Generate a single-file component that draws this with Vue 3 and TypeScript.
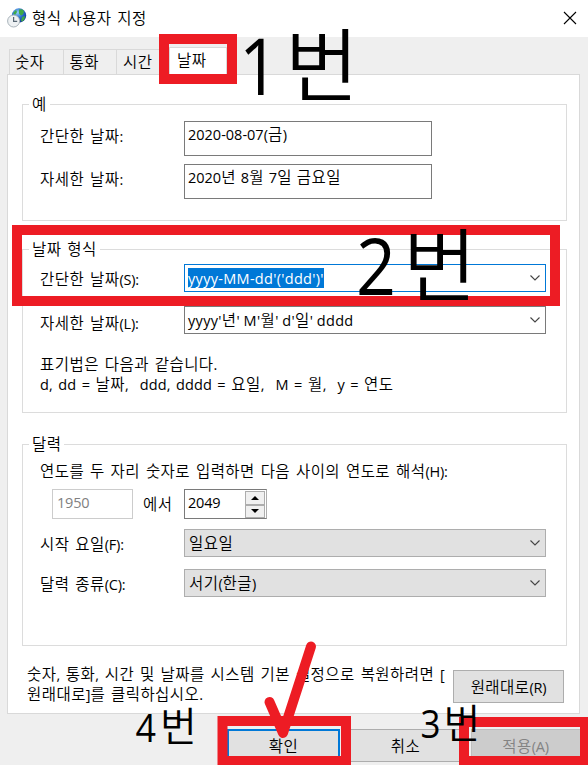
<script setup lang="ts">
import { h, type FunctionalComponent } from 'vue'

/* Splits a label into Hangul and Latin runs so each script gets its own metrics. */
const Txt: FunctionalComponent<{ t: string }> = (props) =>
  h(
    'span',
    { class: 'txt' },
    (props.t.match(/[가-힣]+|[^가-힣]+/g) ?? []).map((run) =>
      h('span', { class: /[가-힣]/.test(run) ? 'ko' : 'la' }, run),
    ),
  )
Txt.props = ['t']

const tabs: string[] = ['숫자', '통화', '시간', '날짜']
const samples = [
  { label: '간단한 날짜:', value: '2020-08-07(금)' },
  { label: '자세한 날짜:', value: '2020년 8월 7일 금요일' },
]
const calendar = [
  { label: '시작 요일(F):', value: '일요일' },
  { label: '달력 종류(C):', value: '서기(한글)' },
]
</script>

<template>
  <div class="window">
    <header class="titlebar">
      <svg class="app-icon" width="20" height="20" viewBox="0 0 20 20">
        <defs>
          <radialGradient id="globe" cx=".4" cy=".3" r=".75">
            <stop offset="0" stop-color="#8fd0f5" />
            <stop offset=".5" stop-color="#2b6fd0" />
            <stop offset="1" stop-color="#10308c" />
          </radialGradient>
        </defs>
        <circle cx="12" cy="7.5" r="7.2" fill="url(#globe)" />
        <path d="M12 1.500q4-1 5 2l-1 3-2 1-2-2zM15 9l3-1q0 3-2 5l-2 .5zM6 5l3-3 1 2-2 3z" fill="#3faa45" />
        <circle cx="6.6" cy="13" r="6" fill="#eef1f3" stroke="#a9b3ba" />
        <path d="M6.600 9v4.400h3.600" fill="none" stroke="#566673" stroke-width="1.2" />
      </svg>
      <Txt class="title" t="형식 사용자 지정" />
      <svg class="close" width="12" height="12" viewBox="0 0 12 12">
        <path d="M0 0L12 12M12 0L0 12" stroke="#000" stroke-width="1.1" />
      </svg>
    </header>

    <nav class="tabs">
      <div v-for="(tab, i) in tabs" :key="tab" class="tab" :class="{ active: i === 3 }">
        <Txt :t="tab" />
      </div>
    </nav>

    <main class="panel">
      <section class="group sample">
        <div class="legend"><Txt t="예" /></div>
        <div v-for="s in samples" :key="s.label" class="row">
          <Txt class="label" :t="s.label" />
          <div class="field"><Txt class="value" :t="s.value" /></div>
        </div>
      </section>

      <section class="group formats">
        <div class="legend"><Txt t="날짜 형식" /></div>
        <div class="row">
          <Txt class="label" t="간단한 날짜(S):" />
          <div class="combo focus">
            <span class="selected"><Txt class="pattern" t="yyyy-MM-dd'('ddd')'" /></span>
            <svg class="chev" width="10" height="6" viewBox="0 0 10 6"><path d="M.5 .5L5 5L9.500 .5" /></svg>
          </div>
        </div>
        <div class="row long">
          <Txt class="label" t="자세한 날짜(L):" />
          <div class="combo">
            <Txt class="pattern" t="yyyy'년' M'월' d'일' dddd" />
            <svg class="chev" width="10" height="6" viewBox="0 0 10 6"><path d="M.5 .5L5 5L9.500 .5" /></svg>
          </div>
        </div>
        <div class="notes">
          <div><Txt t="표기법은 다음과 같습니다." /></div>
          <div><Txt class="notation" t="d, dd = 날짜,  ddd, dddd = 요일,  M = 월,  y = 연도" /></div>
        </div>
      </section>

      <section class="group calendar">
        <div class="legend"><Txt t="달력" /></div>
        <div class="question"><Txt t="연도를 두 자리 숫자로 입력하면 다음 사이의 연도로 해석(H):" /></div>
        <div class="years">
          <div class="year disabled"><Txt t="1950" /></div>
          <Txt class="between" t="에서" />
          <div class="year spin">
            <Txt t="2049" />
            <div class="arrows">
              <i><svg width="8" height="4" viewBox="0 0 8 4"><path d="M0 4L4 0L8 4z" /></svg></i>
              <i><svg width="8" height="4" viewBox="0 0 8 4"><path d="M0 0L4 4L8 0z" /></svg></i>
            </div>
          </div>
        </div>
        <div v-for="c in calendar" :key="c.label" class="row">
          <Txt class="label" :t="c.label" />
          <div class="combo filled">
            <Txt :t="c.value" />
            <svg class="chev" width="10" height="6" viewBox="0 0 10 6"><path d="M.5 .5L5 5L9.500 .5" /></svg>
          </div>
        </div>
      </section>

      <div class="restore">
        <p>
          <Txt t="숫자, 통화, 시간 및 날짜를 시스템 기본 설정으로 복원하려면 [" /><br />
          <Txt t="원래대로]를 클릭하십시오." />
        </p>
        <button class="btn reset"><Txt t="원래대로(R)" /></button>
      </div>
    </main>

    <footer class="actions">
      <button class="btn ok"><Txt t="확인" /></button>
      <button class="btn cancel"><Txt t="취소" /></button>
      <button class="btn apply" disabled><Txt t="적용(A)" /></button>
    </footer>

    <svg class="marks" width="588" height="765" viewBox="0 0 588 765">
      <g fill="none" stroke="#ed1c24" stroke-width="10">
        <rect x="164" y="39" width="68" height="40" />
        <rect x="17" y="230" width="538" height="71" />
        <rect x="222.500" y="721" width="123.500" height="40" />
        <rect x="464" y="722" width="121" height="39" />
        <path d="M269.500 702L283 733L311 646.500" stroke-linecap="round" stroke-linejoin="round" />
      </g>
      <g class="big">
        <text class="digit" x="239" y="95" textLength="40" lengthAdjust="spacingAndGlyphs">1</text>
        <text x="285" y="95">번</text>
        <text class="digit" x="356" y="295" textLength="40" lengthAdjust="spacingAndGlyphs">2</text>
        <text x="403" y="295">번</text>
      </g>
      <g class="small">
        <text class="digit" x="135.500" y="742" textLength="20.500" lengthAdjust="spacingAndGlyphs">4</text>
        <text x="160" y="741">번</text>
        <text class="digit" x="420.500" y="738" textLength="20" lengthAdjust="spacingAndGlyphs">3</text>
        <text x="443.500" y="737.500">번</text>
      </g>
    </svg>
  </div>
</template>

<style>
body { margin: 0; overflow: hidden; }
.txt { white-space: pre; }
.txt .ko { font-family: "Noto Sans CJK KR", sans-serif; font-size: 15.5px; letter-spacing: 0.45px; font-weight: 350; line-height: 0; }
.txt .la { font-family: "Open Sans", "Noto Sans", sans-serif; font-size: 14.5px; letter-spacing: -0.2px; word-spacing: 2.3px; line-height: 0; }
.txt.value .la { letter-spacing: 0; word-spacing: 1.2px; }
.txt.pattern .la { letter-spacing: 0.3px; word-spacing: -0.4px; }
.txt.notation .la { letter-spacing: 0.1px; word-spacing: 1.6px; }
</style>

<style scoped>
.window { position: relative; box-sizing: border-box; width: 588px; height: 765px; overflow: hidden; background: #efefef; color: #000; font: 15px/20px "Open Sans", "Noto Sans CJK KR", sans-serif; }
.titlebar { display: flex; align-items: center; height: 37px; box-sizing: border-box; padding: 0 12px 1px 7px; background: #fff; }
.title { margin-left: 5px; }
.close { margin-left: auto; overflow: visible; }
.tabs { display: flex; align-items: flex-end; height: 37px; padding-left: 9px; }
.tab { box-sizing: border-box; width: 53.5px; height: 25px; padding: 2px 0 0 5px; border: 1px solid #d9d9d9; border-width: 1px 0 0 1px; }
.tab:nth-child(2) { padding-left: 6px; }
.tab:nth-child(3) { width: 53px; padding-left: 6px; }
.tab.active { width: 58px; height: 28px; margin-bottom: -1px; padding: 2px 0 0 7px; border-width: 1px 1px 0; background: #fff; }
.panel { box-sizing: border-box; width: 573px; height: 640px; margin-left: 7px; padding: 29px 12px 0 14px; border: 1px solid #d9d9d9; background: #fff; }
.group { box-sizing: border-box; width: 545px; border: 1px solid #dcdcdc; padding-left: 17px; }
.legend { width: max-content; height: 20px; margin: -11px 0 0 -11px; padding: 0 3px; background: #fff; }
.sample { height: 117px; }
.formats { height: 164px; margin-top: 28px; }
.calendar { height: 202px; margin-top: 31px; }
.row { display: flex; }
.sample .row { margin-top: 8px; }
.sample .legend + .row { margin-top: 7px; }
.label { width: 144px; height: 20px; margin-top: 5px; }
.field { box-sizing: border-box; width: 248px; height: 35px; padding: 2px 3px; border: 1px solid #7a7a7a; }
.combo { display: flex; align-items: center; justify-content: space-between; box-sizing: border-box; width: 362px; height: 28px; padding: 0 5px 1px 3px; border: 1px solid #7a7a7a; background: #fff; }
.combo.focus { border-color: #0078d7; }
.combo.filled { padding-left: 4px; border-color: #adadad; background: #e1e1e1; }
.selected { background: #0078d7; color: #fff; height: 20px; }
.chev path { fill: none; stroke: #444; stroke-width: 1.1; }
.formats .row { margin-top: 5px; }
.formats .row.long { margin-top: 14px; }
.formats .long .label { margin-top: 7px; }
.notes { margin-top: 20px; }
.question { margin-top: 7px; }
.years { display: flex; margin: 8px 0 10px 12px; height: 30px; }
.year { box-sizing: border-box; width: 81px; height: 30px; padding: 2px 4px; border: 1px solid #ccc; }
.disabled { color: #808080; }
.between { width: 41px; margin: 5px 0 0 10px; }
.spin { display: flex; justify-content: space-between; width: 83px; padding: 2px 1px 1px 3px; border-color: #7a7a7a #adadad #7a7a7a #7a7a7a; }
.arrows { display: flex; flex-direction: column; width: 20px; height: 27px; margin-top: -1px; }
.arrows i { display: flex; align-items: center; justify-content: center; flex: 1; border: 1px solid #adadad; background: #f0f0f0; }
.calendar .row + .row { margin-top: 12px; }
.restore { display: flex; margin: 18px 0 0 5px; }
.restore p { width: 426px; margin: 0; white-space: nowrap; }
.btn { display: flex; align-items: center; justify-content: center; box-sizing: border-box; height: 33px; padding: 0; border: 1px solid #adadad; background: #e1e1e1; color: #000; font: inherit; }
.reset { width: 111px; margin-top: 6px; }
.actions { display: flex; gap: 9px; margin: 15px 0 0 227px; }
.ok { width: 113px; border: 2px solid #0078d7; }
.cancel { width: 113px; }
.apply { width: 113px; padding-right: 4px; border-color: #bfbfbf; background: #ccc; color: #838383; }
.marks { position: absolute; left: 0; top: 0; }
.marks text { font-family: "Noto Sans CJK KR", sans-serif; font-weight: 350; fill: #000; }
.marks .digit { font-family: "Open Sans", "Noto Sans", sans-serif; font-weight: 400; }
.big text { font-size: 80px; }
.big .digit { font-size: 78px; }
.small text { font-size: 40px; }
.small .digit { font-size: 39px; }
</style>
